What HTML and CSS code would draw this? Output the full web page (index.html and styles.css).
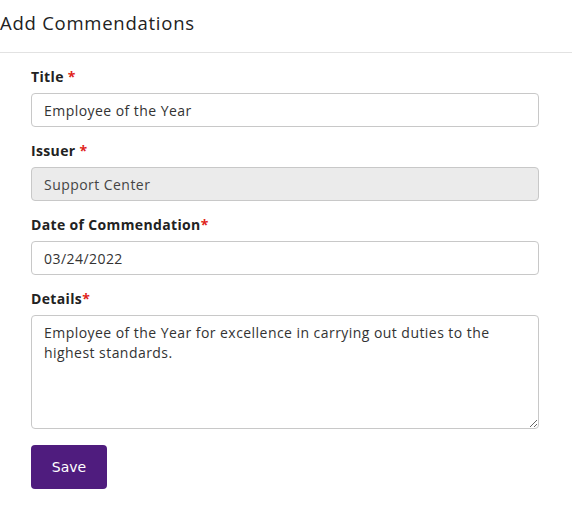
FILE: index.html
```html
<!DOCTYPE html>
<html>
<head>
<meta charset="utf-8">
<link rel="stylesheet" href="styles.css">
</head>
<body>
<div class="header"><h1 class="title">Add Commendations</h1></div>
<form class="form">
  <div class="field">
    <label class="label">Title <span class="req">*</span></label>
    <input class="control" type="text" value="Employee of the Year">
  </div>
  <div class="field">
    <label class="label">Issuer <span class="req">*</span></label>
    <input class="control disabled" type="text" value="Support Center" disabled>
  </div>
  <div class="field">
    <label class="label">Date of Commendation<span class="req">*</span></label>
    <input class="control" type="text" value="03/24/2022">
  </div>
  <div class="field">
    <label class="label">Details<span class="req">*</span></label>
    <textarea class="control area">Employee of the Year for excellence in carrying out duties to the highest standards.</textarea>
  </div>
  <button class="save" type="button">Save</button>
</form>
</body>
</html>
```
FILE: styles.css
```css
* { box-sizing: border-box; }
body {
  margin: 0;
  background: #fff;
  font-family: "Open Sans", "DejaVu Sans", sans-serif;
  color: #333;
}
.header {
  height: 53px;
  border-bottom: 1px solid #e2e2e2;
  display: flex;
  align-items: center;
  padding-bottom: 8px;
}
.title {
  margin: 0;
  font-size: 18.5px;
  font-weight: 400;
  color: #222;
  letter-spacing: 0.75px;
}
.form {
  padding: 15px 33px 0 31px;
  display: flex;
  flex-direction: column;
}
.field {
  display: flex;
  flex-direction: column;
  margin-bottom: 15px;
}
.label {
  font-family: "Open Sans", sans-serif;
  font-weight: 700;
  font-size: 14px;
  color: #222;
  line-height: 18px;
  margin-bottom: 7px;
  letter-spacing: 0.35px;
}
.req { color: #e0241b; }
.control {
  width: 100%;
  height: 34px;
  border: 1px solid #c8c8c8;
  border-radius: 4px;
  padding: 0 12px;
  font-family: "Open Sans", "DejaVu Sans", sans-serif;
  font-size: 14px;
  letter-spacing: 0.45px;
  color: #333;
  background: #fff;
}
.control.disabled {
  background: #ebebeb;
  color: #444;
}
.area {
  height: 114px;
  padding: 7px 12px;
  line-height: 20px;
  resize: vertical;
}
.save {
  margin-top: 1px;
  width: 76px;
  height: 44px;
  background: #4f1c7e;
  color: #fff;
  border: none;
  border-radius: 4px;
  font-family: "DejaVu Sans", sans-serif;
  font-size: 14px;
}
```
